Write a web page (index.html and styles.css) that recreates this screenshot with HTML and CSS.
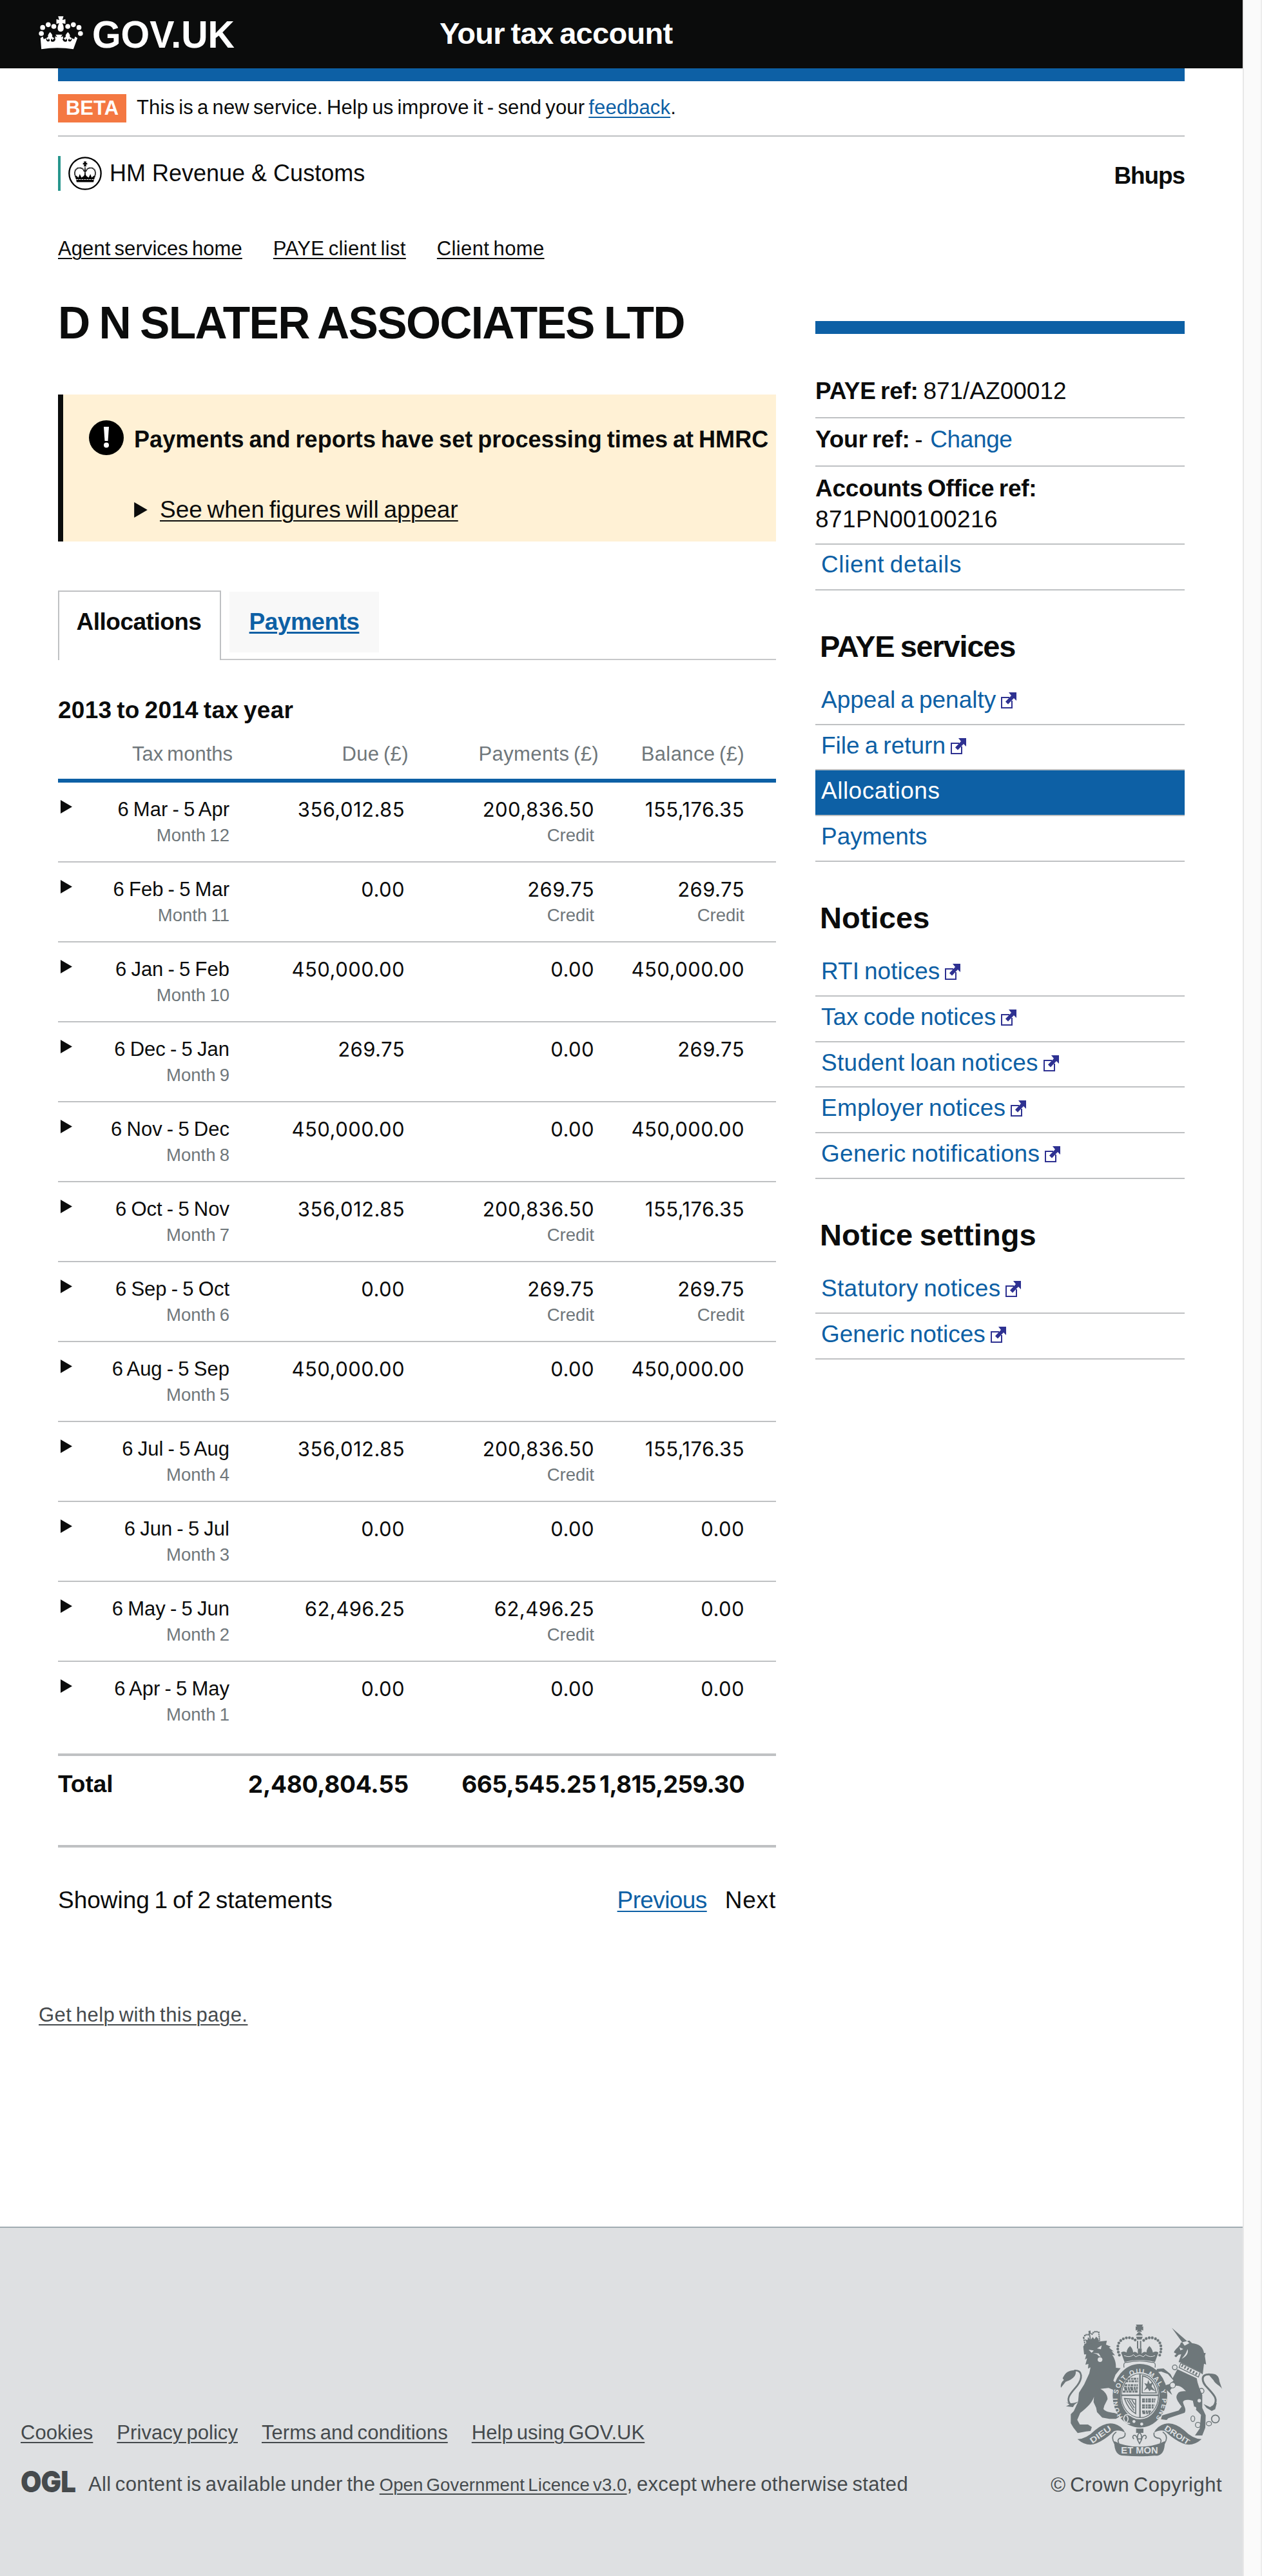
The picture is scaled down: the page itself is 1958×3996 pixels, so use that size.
FILE: index.html
```html
<!DOCTYPE html>
<html lang="en">
<head>
<meta charset="utf-8">
<title>Your tax account - GOV.UK</title>
<link rel="stylesheet" href="styles.css">
</head>
<body>
<svg class="sprite" width="0" height="0" aria-hidden="true">
  <symbol id="ext" viewBox="0 0 24 25"><path d="M13 8H1v16h16V14" fill="none" stroke="#2e3191" stroke-width="2"/><path d="M17 13v10" stroke="#2e3191" stroke-width="2"/><path d="M12 0h12v13l-4-4-9 9.500-4-4L16 5z" fill="#2e3191"/></symbol>
  <symbol id="tri" viewBox="0 0 18 21"><path d="M0 0L18 10.500L0 21z" fill="#0b0c0c"/></symbol>
</svg>
<div class="page">
  <header class="header">
    <a class="logo">
      <svg class="logo-crown" viewBox="32 46 206 156" fill="#fff">
        <circle cx="44" cy="127" r="11.500"/><circle cx="50" cy="99" r="11.500"/><circle cx="76" cy="86" r="11.500"/><circle cx="102" cy="94" r="11.500"/>
        <circle cx="167" cy="94" r="11.500"/><circle cx="193" cy="86" r="11.500"/><circle cx="219" cy="99" r="11.500"/><circle cx="226" cy="127" r="11.500"/>
        <path d="M122 47h25l-5 17 14-4v22l-15-3c8 12 6 20 7 24 0 9-6 15-14 15s-14-6-14-15c0-5 1-13 7-24l-13 3V60l13 4z"/>
        <path d="M40 148l11-7 4 12 11-4c0 11 4 17 12 15 7-2 6-9 0-14l-3 8-8-9 9-7c-4-8 4-16 9-22 6 7 13 14 9 22l10 7-8 9-4-8c-5 5-6 13 2 15 9 2 15-5 17-14l-3 3v-14l10 4-8-12h32l-8 12 11-4v14l-4-3c3 9 9 16 17 14 8-2 7-10 2-15l-4 8-8-9 10-7c-4-8 4-15 9-22 6 6 13 14 9 22l10 7-9 9-3-8c-6 5-7 12 0 14 8 2 12-4 12-15l11 4 4-12 11 7-19 52c-49-8-100-8-149 0z"/>
      </svg>
      <svg class="logo-word" viewBox="0 0 224 60"><text x="0" y="51" textLength="221" lengthAdjust="spacingAndGlyphs">GOV.UK</text></svg>
    </a>
    <div class="header-title">Your tax account</div>
  </header>

  <div class="wrap">
    <div class="blue-bar"></div>
    <div class="phase"><strong class="beta">BETA</strong><span class="phase-text">This is a new service. Help us improve it - send your <a class="link">feedback</a>.</span></div>
    <div class="org">
      <div class="hmrc">
        <svg class="hmrc-crest" viewBox="78 37 158 158">
          <circle cx="157" cy="116" r="75" fill="none" stroke="#000" stroke-width="7"/>
          <path d="M151 60h12l-2 8 6-2v9l-6-2 2 10h-12l2-10-6 2v-9l6 2z"/>
          <path d="M157 88v38M116 140c-14-25-8-47 13-50 14-1 22 8 24 18M198 140c14-25 8-47-13-50-14-1-22 8-24 18" fill="none" stroke="#000" stroke-width="6" stroke-dasharray="5 1.500"/>
          <path d="M112 124l14 12 6-17 8 17 11-8 6-13 6 13 11 8 8-17 6 17 14-12-5 33h-80z"/>
          <path d="M116 145h82" stroke="#fff" stroke-width="3" stroke-dasharray="9 3"/>
        </svg>
        <span class="hmrc-name">HM Revenue &amp; Customs</span>
      </div>
      <div class="user">Bhups</div>
    </div>
    <nav class="crumbs"><a>Agent services home</a><a>PAYE client list</a><a>Client home</a></nav>

    <div class="columns">
      <main class="main">
        <h1 class="title">D N SLATER ASSOCIATES LTD</h1>
        <section class="notice">
          <div class="notice-row">
            <svg class="notice-icon" viewBox="0 0 54 54"><circle cx="27" cy="27" r="27"/><path d="M23 10h8l-1.500 22h-5z" fill="#fff"/><circle cx="27" cy="38.500" r="4" fill="#fff"/></svg>
            <strong class="notice-text">Payments and reports have set processing times at HMRC</strong>
          </div>
          <div class="notice-details"><svg class="notice-tri"><use href="#tri"/></svg><a class="notice-link">See when figures will appear</a></div>
        </section>
        <div class="tabs"><div class="tab tab-active">Allocations</div><a class="tab tab-other">Payments</a></div>
        <h2 class="year">2013 to 2014 tax year</h2>
        <table class="ledger">
          <colgroup><col class="c1"><col class="c2"><col class="c3"><col class="c4"></colgroup>
          <thead><tr><th>Tax months</th><th>Due (£)</th><th>Payments (£)</th><th>Balance (£)</th></tr></thead>
          <tbody>
            <tr><td><div class="month"><svg class="tri"><use href="#tri"/></svg><div>6 Mar - 5 Apr<small>Month 12</small></div></div></td><td>356,012.85</td><td>200,836.50<small>Credit</small></td><td>155,176.35</td></tr>
            <tr><td><div class="month"><svg class="tri"><use href="#tri"/></svg><div>6 Feb - 5 Mar<small>Month 11</small></div></div></td><td>0.00</td><td>269.75<small>Credit</small></td><td>269.75<small>Credit</small></td></tr>
            <tr><td><div class="month"><svg class="tri"><use href="#tri"/></svg><div>6 Jan - 5 Feb<small>Month 10</small></div></div></td><td>450,000.00</td><td>0.00</td><td>450,000.00</td></tr>
            <tr><td><div class="month"><svg class="tri"><use href="#tri"/></svg><div>6 Dec - 5 Jan<small>Month 9</small></div></div></td><td>269.75</td><td>0.00</td><td>269.75</td></tr>
            <tr><td><div class="month"><svg class="tri"><use href="#tri"/></svg><div>6 Nov - 5 Dec<small>Month 8</small></div></div></td><td>450,000.00</td><td>0.00</td><td>450,000.00</td></tr>
            <tr><td><div class="month"><svg class="tri"><use href="#tri"/></svg><div>6 Oct - 5 Nov<small>Month 7</small></div></div></td><td>356,012.85</td><td>200,836.50<small>Credit</small></td><td>155,176.35</td></tr>
            <tr><td><div class="month"><svg class="tri"><use href="#tri"/></svg><div>6 Sep - 5 Oct<small>Month 6</small></div></div></td><td>0.00</td><td>269.75<small>Credit</small></td><td>269.75<small>Credit</small></td></tr>
            <tr><td><div class="month"><svg class="tri"><use href="#tri"/></svg><div>6 Aug - 5 Sep<small>Month 5</small></div></div></td><td>450,000.00</td><td>0.00</td><td>450,000.00</td></tr>
            <tr><td><div class="month"><svg class="tri"><use href="#tri"/></svg><div>6 Jul - 5 Aug<small>Month 4</small></div></div></td><td>356,012.85</td><td>200,836.50<small>Credit</small></td><td>155,176.35</td></tr>
            <tr><td><div class="month"><svg class="tri"><use href="#tri"/></svg><div>6 Jun - 5 Jul<small>Month 3</small></div></div></td><td>0.00</td><td>0.00</td><td>0.00</td></tr>
            <tr><td><div class="month"><svg class="tri"><use href="#tri"/></svg><div>6 May - 5 Jun<small>Month 2</small></div></div></td><td>62,496.25</td><td>62,496.25<small>Credit</small></td><td>0.00</td></tr>
            <tr class="last"><td><div class="month"><svg class="tri"><use href="#tri"/></svg><div>6 Apr - 5 May<small>Month 1</small></div></div></td><td>0.00</td><td>0.00</td><td>0.00</td></tr>
          </tbody>
          <tfoot><tr><td>Total</td><td>2,480,804.55</td><td>665,545.25</td><td>1,815,259.30</td></tr></tfoot>
        </table>
        <div class="pager"><span>Showing 1 of 2 statements</span><span class="pager-links"><a class="link">Previous</a><span>Next</span></span></div>
      </main>

      <aside class="side">
        <div class="blue-bar"></div>
        <div class="ref ref-first"><b>PAYE ref:</b> 871/AZ00012</div>
        <div class="ref"><b>Your ref:</b> - <a class="change">Change</a></div>
        <div class="ref ref-two"><b>Accounts Office ref:</b><br><span class="num">871PN00100216</span></div>
        <a class="item item-details">Client details</a>
        <h3 class="side-title side-title-caps">PAYE services</h3>
        <a class="item">Appeal a penalty<svg class="ext"><use href="#ext"/></svg></a>
        <a class="item">File a return<svg class="ext"><use href="#ext"/></svg></a>
        <a class="item item-active">Allocations</a>
        <a class="item">Payments</a>
        <h3 class="side-title">Notices</h3>
        <a class="item">RTI notices<svg class="ext"><use href="#ext"/></svg></a>
        <a class="item">Tax code notices<svg class="ext"><use href="#ext"/></svg></a>
        <a class="item item-long">Student loan notices<svg class="ext"><use href="#ext"/></svg></a>
        <a class="item item-long">Employer notices<svg class="ext"><use href="#ext"/></svg></a>
        <a class="item item-long">Generic notifications<svg class="ext"><use href="#ext"/></svg></a>
        <h3 class="side-title">Notice settings</h3>
        <a class="item item-long">Statutory notices<svg class="ext"><use href="#ext"/></svg></a>
        <a class="item">Generic notices<svg class="ext"><use href="#ext"/></svg></a>
      </aside>
    </div>
  </div>
  <div class="help"><a>Get help with this page.</a></div>

  <footer class="footer">
    <div class="foot-left">
      <nav class="foot-links"><a>Cookies</a><a>Privacy policy</a><a>Terms and conditions</a><a>Help using GOV.UK</a></nav>
      <div class="licence">
        <svg class="ogl" viewBox="0 0 85 36"><text x="0" y="34" textLength="85" lengthAdjust="spacingAndGlyphs">OGL</text></svg>
        <span>All content is available under the <a class="ogl-link">Open Government Licence v3.0</a>, except where otherwise stated</span>
      </div>
    </div>
    <div class="foot-right">
      <svg class="crest" viewBox="78 45 750 618" fill="#6e777a">
        <!-- lion -->
        <path d="M182 150l8-12q45-18 72-12l30-3-4 18 22 10-8 4 22 18-10-2 16 20-13-2c14 20 18 42 17 60l22 2-24 30-10 28 30 30 10 26 6 16-26 6-18-22 6-10-30-12-38 4c20 10 34 30 33 48l-15 30-4 16c10 12 28 16 50 18 14 4 22 10 24 18l-16 10-30 0-34-6-24-26-4-20-12-26 2-26c-6 24-30 50-64 76l-14 32 12 22 38 0 18 12-6 18-20 2-40 8-20-26-12-20 0-42 14-14 20-44 4-42 24-38 24-52 6-28-12 6 2-22-14 4 8-30-10 6 6-24-10 0z"/>
        <circle cx="260" cy="211" r="11" fill="#dee0e2"/><path d="M207 165l24 4-10 10zM268 145l-22 14 18 4z" fill="#dee0e2"/><path d="M228 180l26 2 10 16-10-4-8-8z" fill="#dee0e2"/>
        <path d="M190 140l-6-30M258 120l-4-36" stroke="#6e777a" stroke-width="7" stroke-linecap="round" stroke-dasharray="0 9" fill="none"/>
        <path d="M184 108q8-18 24-12M254 84q-20-10-32 10" stroke="#6e777a" stroke-width="8" stroke-linecap="round" stroke-dasharray="0 9" fill="none"/>
        <path d="M206 78l10-2 0 10 6 2-8 4 4 26 8-12 8 10 8-12 8 8 6 12-62 20 2-16-8-12 14 4 2-14 8 10z"/>
        <path d="M140 262c42-4 38 38 14 70-24 30-60 60-30 88" fill="none" stroke="#6e777a" stroke-width="8"/>
        <path d="M78 342c-2-14 2-26 14-36l-6-8c12-26 26-38 60-38 8 30-22 46-46 54zM96 404c16 12 38 14 66 0l-20 16-8 12-32-4 16-8z"/>
        <!-- unicorn -->
        <path d="M594 63l60 83 22-12zM676 122l12 12c34 4 52 18 56 46l8 0-4 14 6 40-10-4-2 16-4 34-14-10-98-48 12-36-12 2-12 12-8-6 10-10-12-6c4-16 30-30 32-46z"/>
        <path d="M630 154l18 8-14 6zM668 162c6 24-12 36-28 46 20-24 20-28 28-46z" fill="#dee0e2"/>
        <path d="M632 222l96 48-10 26-96-46z" fill="#dee0e2"/>
        <path d="M636 226l90 44-8 22-90-44z" fill="none" stroke="#6e777a" stroke-width="4"/><path d="M640 238l74 42" stroke="#6e777a" stroke-width="13" stroke-dasharray="7 8"/>
        <path d="M620 256l90 42c4 26 14 50 26 78l0 60 16 34-2 58-14 36-34 0 22-32 6-64-30-30-8-36c-24-6-40-6-46 6 4 20 18 34 8 50l-76 26-8 8-28-4 8-18 76-22 14-18c-28-38-30-46-14-66 10-6 22-6 34-6-18-20-34-30-58-24l-16 20 10 22-14-12-30-30 34-10 16-16-26-30-32-12-28 6 10-18 30-2 32 26 10 20z"/>
        <g fill="#dee0e2"><circle cx="722" cy="402" r="8"/><circle cx="700" cy="438" r="8"/></g>
        <g fill="none" stroke="#6e777a" stroke-width="4"><circle cx="608" cy="247" r="11"/><circle cx="732" cy="357" r="12"/><ellipse cx="692" cy="486" rx="9" ry="13"/><circle cx="716" cy="515" r="12"/><ellipse cx="767" cy="509" rx="12" ry="10"/><circle cx="797" cy="487" r="18" stroke-width="5"/></g>
        <circle cx="598" cy="330" r="13" fill="#dee0e2" stroke="#6e777a" stroke-width="4"/>
        <path d="M770 280c-46-2-36 36-10 62 34 36 50 54 30 84" fill="none" stroke="#6e777a" stroke-width="9"/>
        <path d="M762 277c34-4 52 6 54 36l12 34c-12-18-30-20-40-40zM804 412l-8 30-16 8-24-14-14-18 30 14z"/>
        <!-- crown -->
        <path d="M427 48h33l-5 10 6-2v20l-10-4 4 10h-24l4-10-9 4V56l6 2zM438 84h9l12 14h-33zM428 104h31l-6 14h-20zM432 124h6v36h-6zM446 124h6v36h-6z"/>
        <path d="M350 190c-16-40-6-70 30-80 28-4 46 6 50 20M538 190c14-40 4-70-30-80-28-4-44 6-50 20" fill="none" stroke="#6e777a" stroke-width="13" stroke-linecap="round" stroke-dasharray="0 14.500"/>
        <path d="M358 178q12-10 26 0 0-16 16-30 14 14 14 30 12-8 22 6l0-24h18l0 24q10-14 22-6 0-16 14-30 14 14 16 30 14-10 26 0l-16 44q-72-18-142 0z"/>
        <path d="M372 192q26 12 44-4l10 10 18-8 18 8 10-10q22 16 44 4" fill="none" stroke="#dee0e2" stroke-width="3"/>
        <path d="M372 248q-6-28 16-24 56-14 112 0 22-4 16 24" fill="none" stroke="#6e777a" stroke-width="4"/>
        <!-- garter -->
        <ellipse cx="446" cy="379" rx="108" ry="129" fill="none" stroke="#6e777a" stroke-width="38"/>
        <ellipse cx="446" cy="379" rx="90" ry="108" fill="#dee0e2"/>
        <path id="garter" d="M367 478A104 122 0 1 1 520 482" fill="none"/>
        <text class="motto" font-size="31"><textPath href="#garter" textLength="560">HONI SOIT QUI MAL Y PENSE</textPath></text>
        <ellipse cx="446" cy="379" rx="86" ry="102" fill="none" stroke="#6e777a" stroke-width="4"/>
        <path d="M446 278v202M358 377h176" stroke="#6e777a" stroke-width="7"/>
        <g fill="none" stroke="#6e777a" stroke-width="9" stroke-dasharray="13 4 8 3"><path d="M388 300h50M378 312h60M374 330h62M372 342h64M366 360h70M374 350h60M456 396h62M456 406h60M456 424h58M456 434h54M456 452h46M458 460h34"/></g>
        <path d="M458 286q50 10 64 80h-66z" fill="none" stroke="#6e777a" stroke-width="5"/><path d="M464 356l12-20-10-16 14 4 4-18 8 18 14-8-6 20 18 22-20-8-8 8-8-14z"/>
        <path d="M374 392l52 4v66q-34-18-52-70zM386 398l32 50M396 398l24 38M408 398l14 22" fill="none" stroke="#6e777a" stroke-width="5"/>
        <circle cx="418" cy="499" r="7" fill="#dee0e2"/><circle cx="454" cy="511" r="7" fill="#dee0e2"/>
        <path d="M404 472q-28-16-34 14 6 24 30 22M384 472q14 14 0 30" fill="none" stroke="#dee0e2" stroke-width="5"/>
        <!-- ribbon -->
        <path d="M155 581q40 0 82-42 50-42 92-28 34 10 48 40-40-20-60 0-34 32-74 50-44 18-88-20zM733 581q-40 0-82-42-50-42-92-28-34 10-48 40 40-20 60 0 34 32 74 50 44 18 88-20z"/>
        <path d="M336 548q-30 20-8 54M376 551q6 24-24 26-14 8-4 22M552 548q30 20 8 54M512 551q-6 24 24 26 14 8 4 22" fill="none" stroke="#6e777a" stroke-width="5"/>
        <path d="M326 590q50 26 118 26t118-26q0 72-46 68-72 6-144 0-46 2-46-68z"/>
        <path d="M428 532h34v20h-34z"/><path d="M444 548q-20 24 0 54 20-30 0-54zM436 588q-6-30-20-24-8 8 2 16M452 588q6-30 20-24 8 8-2 16M432 580h24" fill="none" stroke="#6e777a" stroke-width="5"/>
        <text class="motto" font-size="42" x="358" y="648" textLength="172" lengthAdjust="spacingAndGlyphs">ET MON</text>
        <text class="motto" font-size="38" transform="translate(224 602) rotate(-35)" textLength="112" lengthAdjust="spacingAndGlyphs">DIEU</text>
        <text class="motto" font-size="36" transform="translate(557 536) rotate(33)" textLength="132" lengthAdjust="spacingAndGlyphs">DROIT</text>
      </svg>
      <div class="copyright">© Crown Copyright</div>
    </div>
  </footer>
</div>
<div class="gutter"></div>
</body>
</html>
```
FILE: styles.css
```css
* { box-sizing: border-box; }
body { margin: 0; width: 1958px; height: 3996px; display: flex; background: #fff; color: #0b0c0c; font-family: "Liberation Sans", Arial, sans-serif; font-size: 37px; word-spacing: -.07em; line-height: 44px; }
h1, h2, h3 { margin: 0; }
svg { display: block; flex: none; overflow: visible; }
.sprite { position: absolute; }
.page { width: 1928px; display: flex; flex-direction: column; }
.gutter { width: 30px; background: #fafafa; border-left: 2px solid #e8e8e8; border-right: 2px solid #ededed; }
.link { color: #0d60a5; text-decoration: underline; text-decoration-thickness: 2px; text-underline-offset: 4px; }

.header { height: 106px; background: #0b0c0c; color: #fff; display: flex; padding-left: 60px; }
.logo { display: flex; width: 622px; }
.logo-crown { width: 69px; height: 52px; margin-top: 25px; }
.logo-word { width: 224px; height: 60px; margin: 23px 0 0 14px; fill: #fff; font-size: 58.5px; line-height: 60px; font-weight: 700; }
.header-title { font-size: 47px; font-weight: 700; line-height: 103px; letter-spacing: -.7px; }

.wrap { padding: 0 90px; }
.blue-bar { height: 20px; background: #0d60a5; }
.phase { height: 86px; border-bottom: 2px solid #bfc1c3; display: flex; align-items: center; font-size: 31px; }
.beta { width: 106px; height: 44px; background: #f47842; color: #fff; text-align: center; line-height: 43px; margin-right: 16px; }
.phase-text { padding-bottom: 2px; letter-spacing: .13px; }
.org { display: flex; justify-content: space-between; padding-top: 30px; }
.hmrc { height: 54px; border-left: 4px solid #28968d; padding-left: 12px; display: flex; align-items: center; }
.hmrc-crest { width: 52px; height: 52px; }
.hmrc-name { font-size: 36px; margin-left: 12px; word-spacing: 0; }
.user { font-weight: 700; line-height: 62px; letter-spacing: -1.1px; }
.crumbs { margin-top: 62px; display: flex; gap: 48px; font-size: 31px; line-height: 40px; letter-spacing: .08px; }
.crumbs a { text-decoration: underline; text-decoration-thickness: 2px; text-underline-offset: 4px; }
.crumbs a + a { letter-spacing: .35px; }

.columns { display: flex; justify-content: space-between; }
.main { width: 1114px; padding-top: 55px; }
.title { font-size: 69.5px; line-height: 80px; letter-spacing: -1.7px; white-space: nowrap; }
.notice { margin-top: 71px; height: 228px; background: #fff1d5; border-left: 8px solid #0b0c0c; padding: 40px 0 0 40px; }
.notice-row { display: flex; gap: 16px; height: 54px; }
.notice-icon { width: 54px; height: 54px; }
.notice-text { font-size: 36px; line-height: 59px; white-space: nowrap; word-spacing: -.06em; letter-spacing: .06px; }
.notice-details { display: flex; align-items: center; margin: 60px 0 0 70px; height: 50px; }
.notice-tri { width: 21px; height: 24px; margin-right: 19px; }
.notice-link { text-decoration: underline; text-decoration-thickness: 2px; text-underline-offset: 4px; }
.tabs { margin-top: 76px; height: 108px; border-bottom: 2px solid #c7c8ca; display: flex; gap: 13px; }
.tab { font-weight: 700; text-align: center; line-height: 94px; letter-spacing: -.5px; }
.tab-active { width: 253px; height: 108px; border: 2px solid #bfc1c3; border-bottom: 0; background: #fff; padding-right: 2px; }
.tab-other { width: 232px; height: 94px; margin-top: 2px; background: #f8f8f8; color: #0d60a5; text-decoration: underline; text-decoration-thickness: 3px; text-underline-offset: 3px; }
.year { margin-top: 56px; font-size: 37px; letter-spacing: .25px; }

.ledger { margin-top: 26px; width: 1114px; table-layout: fixed; border-collapse: separate; border-spacing: 0; font-size: 31px; text-align: right; }
.c1 { width: 271px; } .c2 { width: 273px; } .c3 { width: 295px; } .c4 { width: 275px; }
.ledger th { height: 64px; padding: 0; border-bottom: 6px solid #0d60a5; line-height: 40px; font-weight: 400; color: #6f777b; vertical-align: top; letter-spacing: .4px; }
.ledger th:first-child { letter-spacing: 0; }
.ledger th:last-child, .ledger td:last-child { padding-right: 49px; }
.ledger td { height: 124px; padding: 23px 6px 0 0; line-height: 38px; vertical-align: top; border-bottom: 2px solid #bfc1c3; font-family: Inter, sans-serif; letter-spacing: .45px; }
.ledger td:first-child, .ledger small { font-family: "Liberation Sans", Arial, sans-serif; letter-spacing: 0; }
.ledger td:first-child { padding-right: 5px; word-spacing: -.045em; }
.ledger small { display: block; font-size: 27.5px; line-height: 41px; color: #6f777b; }
.ledger td:nth-child(3) { padding-right: 7px; }
.month { display: flex; justify-content: space-between; }
.tri { width: 18px; height: 21px; margin: 4px 0 0 4px; }
.ledger .last td { height: 142px; border-bottom: 0; }
.ledger tfoot td { height: 146px; padding: 22px 0 0; border-top: 4px solid #bfc1c3; border-bottom: 4px solid #bfc1c3; font-size: 37px; font-weight: 700; line-height: 44px; letter-spacing: -.25px; }
.ledger tfoot td:first-child { text-align: left; }
.ledger tfoot td:nth-child(3) { padding-right: 4px; letter-spacing: -.5px; }
.ledger tfoot td:last-child { letter-spacing: -.65px; }
.pager { margin-top: 60px; display: flex; justify-content: space-between; }
.pager-links { display: flex; gap: 28px; }
.pager-links .link { letter-spacing: -.6px; }
.pager-links span { letter-spacing: .8px; }

.side { width: 573px; padding-top: 92px; }
.ref { border-bottom: 2px solid #bfc1c3; padding: 9px 0 16px; line-height: 48px; }
.ref b { letter-spacing: -.25px; }
.ref-first { padding-top: 65px; }
.ref-two { padding: 10px 0 14px; line-height: 47.5px; }
.num { letter-spacing: .4px; }
.change { color: #0d60a5; margin-left: 4px; letter-spacing: -.4px; }
.item { display: flex; height: 70.8px; padding: 8px 0 0 9px; line-height: 48px; border-bottom: 2px solid #bfc1c3; color: #0d60a5; letter-spacing: 0; word-spacing: -.06em; }
.item-long { letter-spacing: .3px; }
.item-details { letter-spacing: .6px; padding-top: 7px; }
.item-active { background: #0d60a5; color: #fff; letter-spacing: .5px; }
.ext { width: 24px; height: 25px; margin: 12px 0 0 8px; }
.side-title { font-size: 47px; line-height: 56px; margin: 59px 0 23px 7px; letter-spacing: .1px; }
.side-title-caps { letter-spacing: -1.2px; }

.help { margin: 136px 0 0 60px; font-size: 31px; line-height: 40px; color: #454a4d; letter-spacing: .45px; }
.help a, .foot-links a, .ogl-link { text-decoration: underline; text-decoration-thickness: 2px; text-underline-offset: 4px; }
.footer { margin-top: auto; height: 542px; flex: none; background: #dee0e2; border-top: 2px solid #a1acb2; color: #454a4d; padding: 0 32px 121px; display: flex; justify-content: space-between; align-items: flex-end; font-size: 31px; line-height: 40px; letter-spacing: .3px; }
.foot-links { display: flex; gap: 37px; letter-spacing: .05px; }
.licence { display: flex; margin-top: 40px; }
.ogl { width: 85px; height: 36px; margin: -2px 20px 0 0; font-family: Inter, sans-serif; font-size: 46px; font-weight: 900; fill: #454a4d; letter-spacing: -1px; }
.ogl-link { font-size: 27.5px; letter-spacing: .15px; }
.licence span { letter-spacing: .35px; }
.licence .ogl-link { letter-spacing: .12px; }
.foot-right { text-align: right; }
.copyright { letter-spacing: .5px; }
.crest { width: 250px; height: 206px; margin: 0 0 24px auto; }
.motto { font-weight: 700; fill: #dee0e2; word-spacing: 0; letter-spacing: 0; }
```
